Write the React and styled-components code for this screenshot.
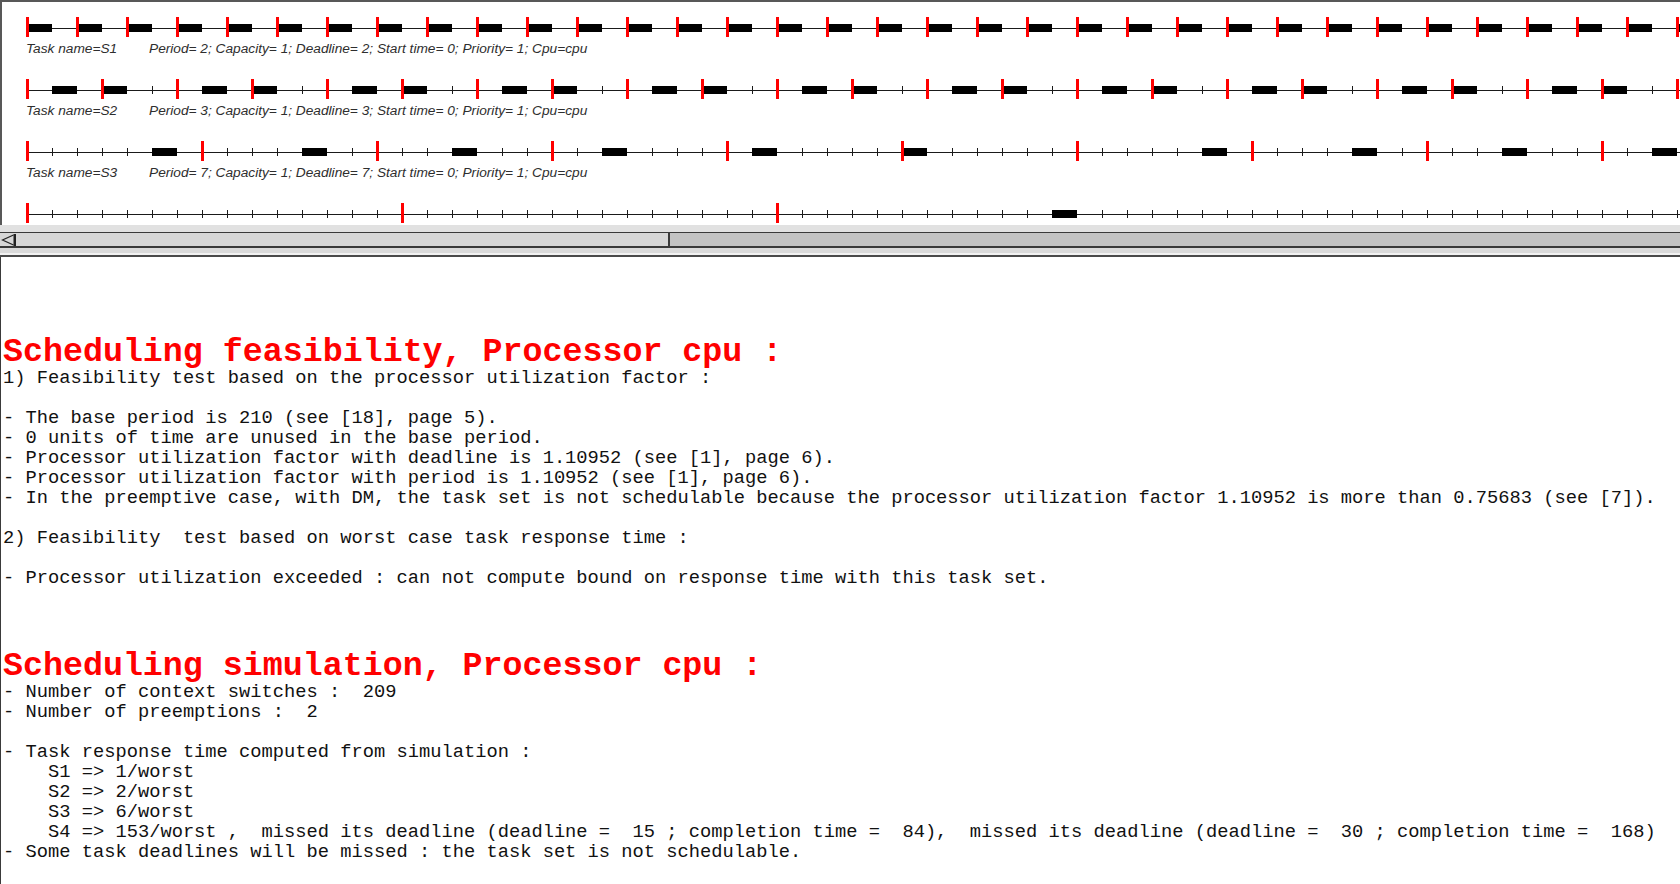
import React from 'react';
import styled, { createGlobalStyle } from 'styled-components';

const GlobalStyle = createGlobalStyle`
  html, body {
    margin: 0;
    padding: 0;
    background: #ffffff;
  }
  body {
    width: 1680px;
    height: 884px;
    overflow: hidden;
    font-family: "Liberation Sans", Arial, sans-serif;
  }
`;

const UNIT = 25;
const ORIGIN = 25;
const SPAN = 68;
const SVG_W = 1678;

const range = (n, f) => Array.from({ length: n }, (_, i) => i).filter(f);

const tasks = [
  {
    name: 'S1',
    details: 'Period= 2; Capacity= 1; Deadline= 2; Start time= 0; Priority= 1; Cpu=cpu',
    releases: range(SPAN, (t) => t % 2 === 0),
    runs: range(SPAN, (t) => t % 2 === 0),
  },
  {
    name: 'S2',
    details: 'Period= 3; Capacity= 1; Deadline= 3; Start time= 0; Priority= 1; Cpu=cpu',
    releases: range(SPAN, (t) => t % 3 === 0),
    runs: range(SPAN, (t) => t % 6 === 1 || t % 6 === 3),
  },
  {
    name: 'S3',
    details: 'Period= 7; Capacity= 1; Deadline= 7; Start time= 0; Priority= 1; Cpu=cpu',
    releases: range(SPAN, (t) => t % 7 === 0),
    runs: [5, 11, 17, 23, 29, 35, 47, 53, 59, 65],
  },
  {
    name: 'S4',
    details: null,
    releases: [0, 15, 30],
    runs: [41],
  },
];

const Page = styled.div`
  width: 1680px;
  height: 884px;
  display: flex;
  flex-direction: column;
  background: #ffffff;
`;

const ChartPanel = styled.div`
  box-sizing: border-box;
  height: 225px;
  border-top: 2px solid #585858;
  border-left: 2px solid #585858;
  padding-top: 15px;
  background: #ffffff;
  overflow: hidden;
  display: flex;
  flex-direction: column;
`;

const TaskRow = styled.div`
  height: 62px;
  flex: 0 0 62px;
  display: flex;
  flex-direction: column;
`;

const TimelineSvg = styled.svg`
  display: block;
  width: ${SVG_W}px;
  height: 22px;
  flex: 0 0 22px;
`;

const TaskLabel = styled.div`
  display: flex;
  margin-top: 2px;
  padding-left: 24px;
  height: 16px;
  line-height: 16px;
  font-family: "Liberation Sans", Arial, sans-serif;
  font-style: italic;
  font-size: 13.7px;
  color: #2e2e2e;
  white-space: nowrap;
`;

const TaskName = styled.span`
  width: 123px;
  flex: 0 0 123px;
`;

const TaskDetails = styled.span``;

const ScrollFrame = styled.div`
  background: #e1e1e1;
  padding-top: 7px;
  display: flex;
  flex-direction: column;
`;

const Track = styled.div`
  height: 13px;
  border-top: 1px solid #3a3a3a;
  border-bottom: 2px solid #3a3a3a;
  background: #c3c3c3;
  display: flex;
`;

const Thumb = styled.div`
  box-sizing: border-box;
  width: 670px;
  height: 13px;
  background: #d7d7d7;
  border-right: 2px solid #3a3a3a;
  display: flex;
  align-items: center;
`;

const ArrowButton = styled.div`
  width: 17px;
  height: 13px;
  display: flex;
  align-items: center;
  justify-content: center;
`;

const FrameFoot = styled.div`
  height: 7px;
  background: #dadada;
  box-shadow: inset 0 -2px 0 #f2f2f2;
  border-bottom: 2px solid #4a4a4a;
`;

const Report = styled.div`
  flex: 1;
  border-left: 1px solid #3a3a3a;
  padding: 80px 0 0 2px;
  background: #ffffff;
  overflow: hidden;
`;

const Heading = styled.div`
  margin-top: ${(p) => p.$gap || 0}px;
  font-family: "Liberation Mono", "Courier New", monospace;
  font-weight: bold;
  font-size: 33.3px;
  line-height: 31px;
  height: 31px;
  color: #ff0000;
  white-space: pre;
`;

const Lines = styled.div`
  font-family: "Liberation Mono", "Courier New", monospace;
  font-size: 18.74px;
  line-height: 20px;
  color: #111111;
  white-space: pre;
`;

const Line = styled.div`
  height: 20px;
`;

function Timeline({ releases, runs }) {
  const busy = new Set();
  runs.forEach((t) => {
    busy.add(t);
    busy.add(t + 1);
  });
  const rel = new Set(releases);
  const ticks = range(SPAN, (t) => !busy.has(t) && !rel.has(t));
  return (
    <TimelineSvg viewBox={`0 0 ${SVG_W} 22`}>
      <rect x={ORIGIN} y={11} width={SVG_W - ORIGIN} height={1} fill="#1a1a1a" />
      {ticks.map((t) => (
        <rect key={`k${t}`} x={ORIGIN + t * UNIT} y={7} width={1} height={8} fill="#1a1a1a" />
      ))}
      {runs.map((t) => (
        <rect key={`b${t}`} x={ORIGIN + t * UNIT} y={7} width={UNIT} height={8} fill="#000000" />
      ))}
      {releases.map((t) => (
        <rect key={`r${t}`} x={ORIGIN + t * UNIT - 1} y={0} width={3} height={20} fill="#ff0000" />
      ))}
    </TimelineSvg>
  );
}

const feasibility = [
  '1) Feasibility test based on the processor utilization factor :',
  '',
  '- The base period is 210 (see [18], page 5).',
  '- 0 units of time are unused in the base period.',
  '- Processor utilization factor with deadline is 1.10952 (see [1], page 6).',
  '- Processor utilization factor with period is 1.10952 (see [1], page 6).',
  '- In the preemptive case, with DM, the task set is not schedulable because the processor utilization factor 1.10952 is more than 0.75683 (see [7]).',
  '',
  '2) Feasibility  test based on worst case task response time :',
  '',
  '- Processor utilization exceeded : can not compute bound on response time with this task set.',
  '',
  '',
  '',
];

const simulation = [
  '- Number of context switches :  209',
  '- Number of preemptions :  2',
  '',
  '- Task response time computed from simulation :',
  '    S1 => 1/worst',
  '    S2 => 2/worst',
  '    S3 => 6/worst',
  '    S4 => 153/worst ,  missed its deadline (deadline =  15 ; completion time =  84),  missed its deadline (deadline =  30 ; completion time =  168)',
  '- Some task deadlines will be missed : the task set is not schedulable.',
];

export default function App() {
  return (
    <>
      <GlobalStyle />
      <Page>
        <ChartPanel>
          {tasks.map((task) => (
            <TaskRow key={task.name}>
              <Timeline releases={task.releases} runs={task.runs} />
              {task.details && (
                <TaskLabel>
                  <TaskName>Task name={task.name}</TaskName>
                  <TaskDetails>{task.details}</TaskDetails>
                </TaskLabel>
              )}
            </TaskRow>
          ))}
        </ChartPanel>
        <ScrollFrame>
          <Track>
            <Thumb>
              <ArrowButton>
                <svg width="15" height="12" viewBox="0 0 15 12">
                  <polyline points="12.5,1 1.5,6 12.5,11" fill="none" stroke="#222" strokeWidth="1.2" />
                  <rect x="12.5" y="0" width="2.5" height="12" fill="#222" />
                </svg>
              </ArrowButton>
            </Thumb>
          </Track>
          <FrameFoot />
        </ScrollFrame>
        <Report>
          <Heading>Scheduling feasibility, Processor cpu :</Heading>
          <Lines>
            {feasibility.map((l, i) => (
              <Line key={i}>{l}</Line>
            ))}
          </Lines>
          <Heading $gap={3}>Scheduling simulation, Processor cpu :</Heading>
          <Lines>
            {simulation.map((l, i) => (
              <Line key={i}>{l}</Line>
            ))}
          </Lines>
        </Report>
      </Page>
    </>
  );
}
